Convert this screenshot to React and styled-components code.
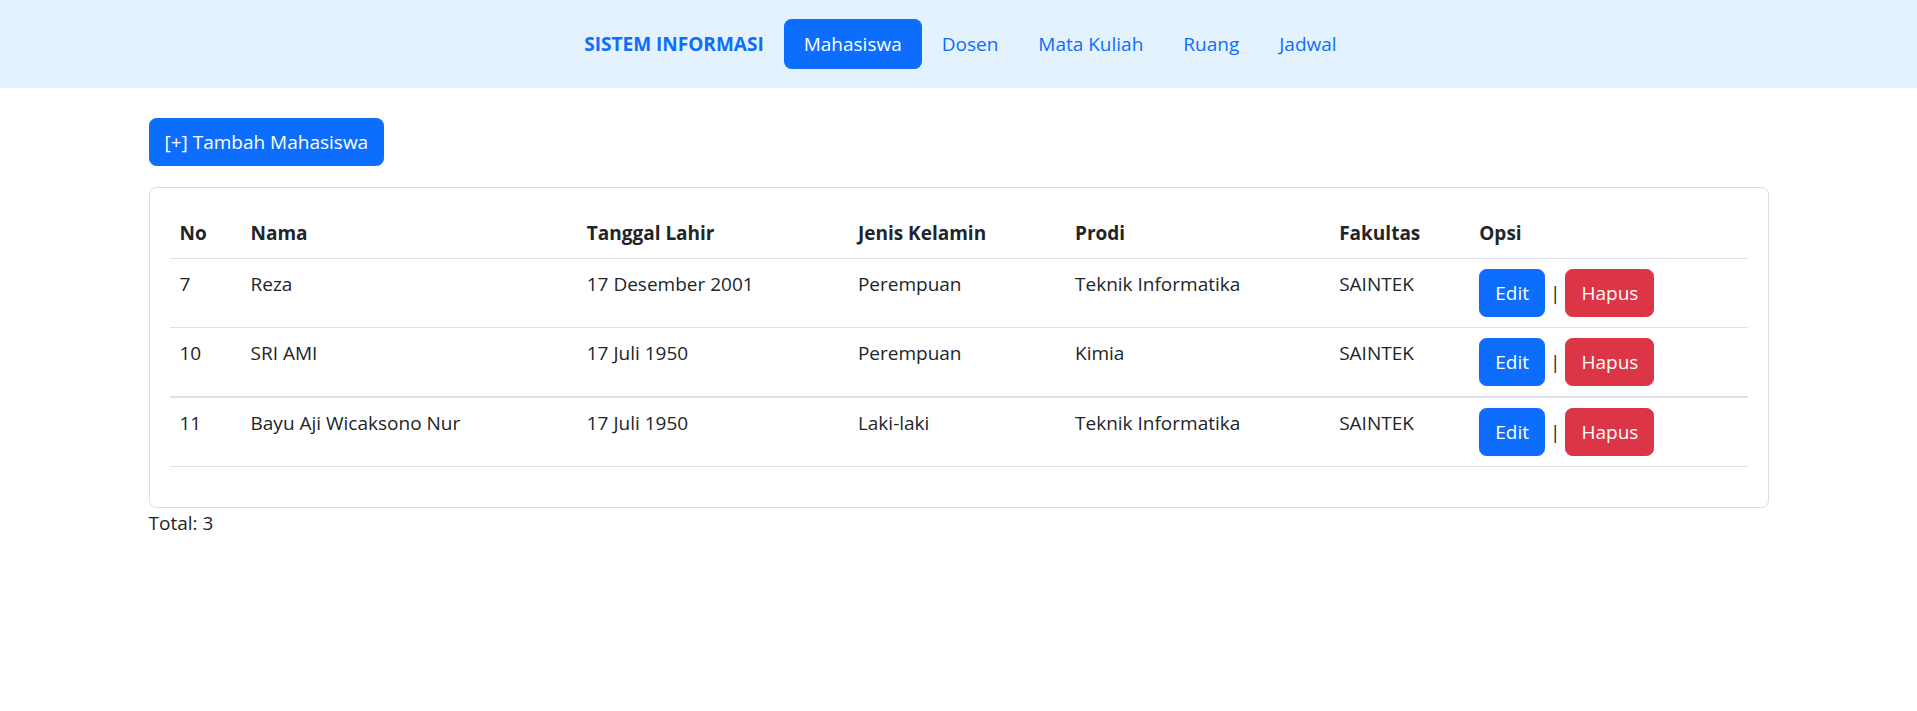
import React from 'react';
import styled, { createGlobalStyle } from 'styled-components';

const GlobalStyle = createGlobalStyle`
  body {
    margin: 0;
    background: #ffffff;
    color: #212529;
    font-family: "Open Sans", "Noto Sans", sans-serif;
    font-size: 19px;
    line-height: 30px;
  }
  * {
    box-sizing: border-box;
  }
`;

const NavBar = styled.nav`
  width: 100%;
  height: 88px;
  background: #e3f2fd;
  display: flex;
  justify-content: center;
  align-items: center;
  padding-left: 24px;
`;

const Brand = styled.span`
  font-weight: bold;
  font-size: 19px;
  color: #0d6efd;
  margin-right: 20px;
`;

const NavLink = styled.a`
  display: block;
  padding: 10px 20px;
  border-radius: 7.5px;
  font-size: 19px;
  line-height: 30px;
  text-decoration: none;
  cursor: pointer;
  color: ${(props) => (props.$active ? '#ffffff' : '#0d6efd')};
  background: ${(props) => (props.$active ? '#0d6efd' : 'transparent')};
`;

const Container = styled.main`
  width: 1620px;
  margin: 30px auto 0;
`;

const Button = styled.button`
  font-family: inherit;
  font-size: 19px;
  line-height: 30px;
  padding: 8px 15px;
  border: 1px solid ${(props) => props.$color};
  background: ${(props) => props.$color};
  color: #ffffff;
  border-radius: 7.5px;
  cursor: pointer;
`;

const AddButton = styled(Button)`
  margin-bottom: 21px;
`;

const Card = styled.div`
  border: 1px solid #d9dcdf;
  border-radius: 7.5px;
  padding: 20px;
`;

const Table = styled.table`
  width: 100%;
  border-collapse: collapse;
  margin-bottom: 20px;
`;

const HeadCell = styled.th`
  text-align: left;
  font-weight: bold;
  padding: 10px;
  width: ${(props) => props.$width}px;
  border-bottom: 1px solid #dee2e6;
  vertical-align: top;
`;

const Row = styled.tr`
  border-bottom: ${(props) => (props.$thick ? '2px solid #dee2e6' : '1px solid #dee2e6')};
`;

const Cell = styled.td`
  padding: 10px;
  vertical-align: top;
`;

const Actions = styled.div`
  display: flex;
  align-items: center;
`;

const Divider = styled.span`
  padding: 0 5px;
  color: #212529;
`;

const Total = styled.div`
  font-size: 19px;
`;

const columns = [
  { title: 'No', width: 71 },
  { title: 'Nama', width: 336 },
  { title: 'Tanggal Lahir', width: 271 },
  { title: 'Jenis Kelamin', width: 217 },
  { title: 'Prodi', width: 264 },
  { title: 'Fakultas', width: 140 },
  { title: 'Opsi', width: 278 },
];

const students = [
  { no: 7, nama: 'Reza', lahir: '17 Desember 2001', jk: 'Perempuan', prodi: 'Teknik Informatika', fakultas: 'SAINTEK' },
  { no: 10, nama: 'SRI AMI', lahir: '17 Juli 1950', jk: 'Perempuan', prodi: 'Kimia', fakultas: 'SAINTEK' },
  { no: 11, nama: 'Bayu Aji Wicaksono Nur', lahir: '17 Juli 1950', jk: 'Laki-laki', prodi: 'Teknik Informatika', fakultas: 'SAINTEK' },
];

const menu = ['Mahasiswa', 'Dosen', 'Mata Kuliah', 'Ruang', 'Jadwal'];

const App = () => {
  return (
    <>
      <GlobalStyle />
      <NavBar>
        <Brand>SISTEM INFORMASI</Brand>
        {menu.map((item) => (
          <NavLink key={item} $active={item === 'Mahasiswa'}>
            {item}
          </NavLink>
        ))}
      </NavBar>
      <Container>
        <AddButton $color="#0d6efd">[+] Tambah Mahasiswa</AddButton>
        <Card>
          <Table>
            <thead>
              <tr>
                {columns.map((col) => (
                  <HeadCell key={col.title} $width={col.width}>
                    {col.title}
                  </HeadCell>
                ))}
              </tr>
            </thead>
            <tbody>
              {students.map((s, index) => (
                <Row key={s.no} $thick={index === 1}>
                  <Cell>{s.no}</Cell>
                  <Cell>{s.nama}</Cell>
                  <Cell>{s.lahir}</Cell>
                  <Cell>{s.jk}</Cell>
                  <Cell>{s.prodi}</Cell>
                  <Cell>{s.fakultas}</Cell>
                  <Cell>
                    <Actions>
                      <Button $color="#0d6efd">Edit</Button>
                      <Divider>|</Divider>
                      <Button $color="#dc3545">Hapus</Button>
                    </Actions>
                  </Cell>
                </Row>
              ))}
            </tbody>
          </Table>
        </Card>
        <Total>Total: {students.length}</Total>
      </Container>
    </>
  );
};

export default App;
